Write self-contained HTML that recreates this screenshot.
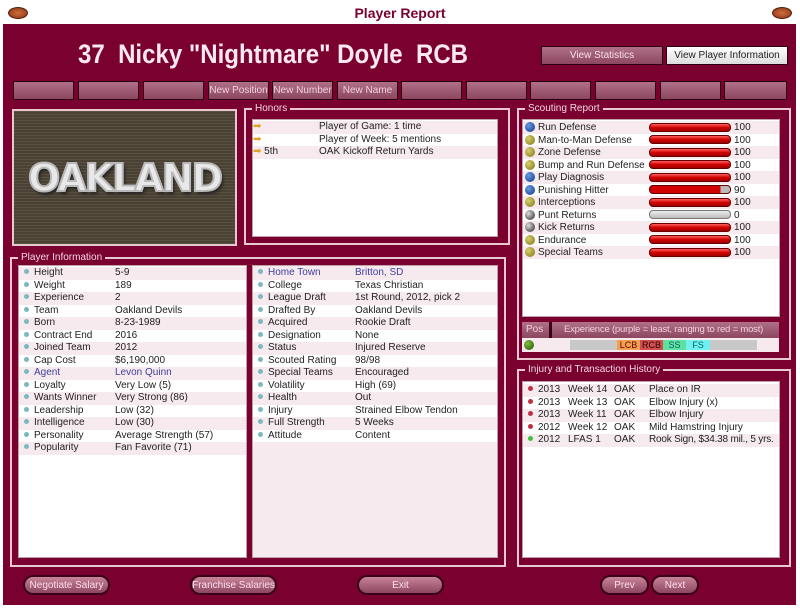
<!DOCTYPE html>
<html><head><meta charset="utf-8"><style>
*{margin:0;padding:0;box-sizing:border-box}
body{width:800px;height:608px;background:#fff;font-family:"Liberation Sans",sans-serif;font-size:10px;position:relative;overflow:hidden}
.a{position:absolute}
#main{left:3px;top:24px;width:793px;height:581px;background:#7a0030}
.title{left:0;top:0;width:800px;height:24px;text-align:center;font-size:14px;font-weight:bold;color:#7a0030;line-height:26px}
.ball{width:20px;height:12px;border-radius:50%;background:radial-gradient(#d07040,#8a3010);border:1px solid #502010;top:7px}
.frame{border:2px solid #e8c8d0;}
.leg{background:#7a0030;color:#f0d8e0;font-size:10px;padding:0 3px;top:-8px;left:6px;line-height:13px}
.list{background:#fff;border:1px solid #c0a0a8}
.row{position:absolute;left:0;right:0;height:12.5px;line-height:12.5px;color:#222;font-size:10px;white-space:nowrap}
.row:nth-child(odd){background:#f6eaee}
.btn{height:19px;background:linear-gradient(#b07088,#8c4660);border:1px solid #2a0010;color:#f0d0dc;font-size:10px;text-align:center;line-height:17px}
.pb{height:20px;border-radius:10px;background:linear-gradient(#c88498,#8c4660);border:2px solid #3a0018;color:#fde;font-size:10px;text-align:center;line-height:17px}
.dot{display:inline-block;width:5px;height:5px;border-radius:50%;background:#7cb8c0;margin:0 5px 0 5px;vertical-align:1px}
.ball2{position:absolute;left:2px;top:1px;width:10px;height:10px;border-radius:50%}
.lb{position:absolute;left:15px;top:1px}
.bar{position:absolute;left:126px;top:1.5px;width:82px;height:9px;border-radius:4px;background:linear-gradient(#ff6060,#d00000 50%,#a00000);border:1px solid #600}
.v{position:absolute;left:211px;top:1px;line-height:12.5px}
</style></head><body>
<div class="a title">Player Report</div>
<div class="a ball" style="left:8px"></div>
<div class="a ball" style="left:772px"></div>
<div class="a" id="main"></div>
<div class="a" style="left:78px;top:39px;font-size:27px;font-weight:bold;color:#fbe8f0;white-space:nowrap;transform:scaleX(0.89);transform-origin:0 0;font-family:'Liberation Sans',sans-serif">37 &nbsp;Nicky "Nightmare" Doyle &nbsp;RCB</div>
<div class="a btn" style="left:541px;top:46px;width:122px;color:#f8e0ea">View Statistics</div>
<div class="a btn" style="left:666px;top:46px;width:122px;background:linear-gradient(#fff,#ddd);color:#222">View Player Information</div>
<div class="a btn" style="left:13px;top:81px;width:61px"></div>
<div class="a btn" style="left:78px;top:81px;width:61px"></div>
<div class="a btn" style="left:143px;top:81px;width:61px"></div>
<div class="a btn" style="left:208px;top:81px;width:61px">New Position</div>
<div class="a btn" style="left:272px;top:81px;width:61px">New Number</div>
<div class="a btn" style="left:337px;top:81px;width:61px">New Name</div>
<div class="a btn" style="left:401px;top:81px;width:61px"></div>
<div class="a btn" style="left:466px;top:81px;width:61px"></div>
<div class="a btn" style="left:530px;top:81px;width:61px"></div>
<div class="a btn" style="left:595px;top:81px;width:61px"></div>
<div class="a btn" style="left:660px;top:81px;width:61px"></div>
<div class="a btn" style="left:724px;top:81px;width:63px"></div>

<div class="a" style="left:12px;top:109px;width:225px;height:137px;border:2px solid #e8c8d0;background:repeating-linear-gradient(0deg,#5a5040 0 1px,#4a4234 1px 3px),#544a3c"></div>
<div class="a" style="left:12px;top:156px;width:225px;text-align:center;font-size:38px;font-weight:900;font-family:'DejaVu Sans','Liberation Sans',sans-serif;color:#e8e8e8;-webkit-text-stroke:2px #b8b8b8;letter-spacing:-2px;text-shadow:2px 3px 3px #222">OAKLAND</div>

<div class="a frame" style="left:244px;top:108px;width:266px;height:137px"><div class="a leg">Honors</div></div>
<div class="a list" style="left:252px;top:119px;width:246px;height:118px">
<div class="row" style="top:1px"><span style="color:#e0a020">➡</span><span class="a" style="left:66px">Player of Game: 1 time</span></div>
<div class="row" style="top:13.5px;background:#fff"><span style="color:#e0a020">➡</span><span class="a" style="left:66px">Player of Week: 5 mentions</span></div>
<div class="row" style="top:26px"><span style="color:#e0a020">➡</span> 5th<span class="a" style="left:66px">OAK Kickoff Return Yards</span></div>
</div>

<div class="a frame" style="left:517px;top:108px;width:274px;height:252px"><div class="a leg">Scouting Report</div></div>
<div class="a list" style="left:522px;top:119px;width:258px;height:198px">
<div class="row" style="top:1px"><span class="ball2" style="background:radial-gradient(circle at 35% 35%,#6a9ae0,#0a3a8a)"></span><span class="lb">Run Defense</span><div class="bar"></div><span class="v">100</span></div>
<div class="row" style="top:13.5px"><span class="ball2" style="background:radial-gradient(circle at 35% 35%,#d8d070,#807010)"></span><span class="lb">Man-to-Man Defense</span><div class="bar"></div><span class="v">100</span></div>
<div class="row" style="top:26px"><span class="ball2" style="background:radial-gradient(circle at 35% 35%,#d8d070,#807010)"></span><span class="lb">Zone Defense</span><div class="bar"></div><span class="v">100</span></div>
<div class="row" style="top:38.5px"><span class="ball2" style="background:radial-gradient(circle at 35% 35%,#d8d070,#807010)"></span><span class="lb">Bump and Run Defense</span><div class="bar"></div><span class="v">100</span></div>
<div class="row" style="top:51px"><span class="ball2" style="background:radial-gradient(circle at 35% 35%,#6a9ae0,#0a3a8a)"></span><span class="lb">Play Diagnosis</span><div class="bar"></div><span class="v">100</span></div>
<div class="row" style="top:63.5px"><span class="ball2" style="background:radial-gradient(circle at 35% 35%,#6a9ae0,#0a3a8a)"></span><span class="lb">Punishing Hitter</span><div class="bar" style="background:linear-gradient(90deg,#d00000 88%,#bbb 88%)"></div><span class="v">90</span></div>
<div class="row" style="top:76px"><span class="ball2" style="background:radial-gradient(circle at 35% 35%,#d8d070,#807010)"></span><span class="lb">Interceptions</span><div class="bar"></div><span class="v">100</span></div>
<div class="row" style="top:88.5px"><span class="ball2" style="background:radial-gradient(circle at 35% 35%,#ddd,#222)"></span><span class="lb">Punt Returns</span><div class="bar" style="background:linear-gradient(#eee,#bbb);border-color:#777"></div><span class="v">0</span></div>
<div class="row" style="top:101px"><span class="ball2" style="background:radial-gradient(circle at 35% 35%,#ddd,#222)"></span><span class="lb">Kick Returns</span><div class="bar"></div><span class="v">100</span></div>
<div class="row" style="top:113.5px"><span class="ball2" style="background:radial-gradient(circle at 35% 35%,#d8d070,#807010)"></span><span class="lb">Endurance</span><div class="bar"></div><span class="v">100</span></div>
<div class="row" style="top:126px"><span class="ball2" style="background:radial-gradient(circle at 35% 35%,#d8d070,#807010)"></span><span class="lb">Special Teams</span><div class="bar"></div><span class="v">100</span></div>
</div>
<div class="a" style="left:522px;top:322px;width:257px;height:16px;background:linear-gradient(#b07088,#8c4660);color:#f0d0dc;line-height:16px;white-space:nowrap;overflow:hidden">
<span class="a" style="left:4px">Pos</span><span class="a" style="left:27px;top:0;width:3px;height:16px;background:#3a0018"></span><span class="a" style="left:42px;font-size:9.5px;letter-spacing:-0.2px">Experience (purple = least, ranging to red = most)</span></div>
<div class="a" style="left:522px;top:338px;width:257px;height:14px;background:#f6eaee">
<span class="a" style="left:2px;top:2px;width:10px;height:10px;border-radius:50%;background:radial-gradient(circle at 35% 35%,#80c040,#205000)"></span>
<span class="a" style="left:48px;top:2px;width:187px;height:10px;background:#c8c8c8"></span>
<span class="a" style="left:95px;top:2px;width:23px;height:10px;background:#f0a050;font-size:9px;line-height:10px;text-align:center;color:#600">LCB</span>
<span class="a" style="left:118px;top:2px;width:23px;height:10px;background:#d05050;font-size:9px;line-height:10px;text-align:center;color:#300">RCB</span>
<span class="a" style="left:141px;top:2px;width:23px;height:10px;background:#60e0a0;font-size:9px;line-height:10px;text-align:center;color:#066">SS</span>
<span class="a" style="left:164px;top:2px;width:24px;height:10px;background:#70f0f0;font-size:9px;line-height:10px;text-align:center;color:#066">FS</span>
</div>

<div class="a frame" style="left:10px;top:257px;width:496px;height:310px"><div class="a leg">Player Information</div></div>
<div class="a list" style="left:18px;top:265px;width:229px;height:293px">
<div class="row" style="top:1px"><span class="dot"></span>Height<span class="a" style="left:96px">5-9</span></div>
<div class="row" style="top:13.5px"><span class="dot"></span>Weight<span class="a" style="left:96px">189</span></div>
<div class="row" style="top:26px"><span class="dot"></span>Experience<span class="a" style="left:96px">2</span></div>
<div class="row" style="top:38.5px"><span class="dot"></span>Team<span class="a" style="left:96px">Oakland Devils</span></div>
<div class="row" style="top:51px"><span class="dot"></span>Born<span class="a" style="left:96px">8-23-1989</span></div>
<div class="row" style="top:63.5px"><span class="dot"></span>Contract End<span class="a" style="left:96px">2016</span></div>
<div class="row" style="top:76px"><span class="dot"></span>Joined Team<span class="a" style="left:96px">2012</span></div>
<div class="row" style="top:88.5px"><span class="dot"></span>Cap Cost<span class="a" style="left:96px">$6,190,000</span></div>
<div class="row" style="top:101px;color:#4040a0"><span class="dot"></span>Agent<span class="a" style="left:96px">Levon Quinn</span></div>
<div class="row" style="top:113.5px"><span class="dot"></span>Loyalty<span class="a" style="left:96px">Very Low (5)</span></div>
<div class="row" style="top:126px"><span class="dot"></span>Wants Winner<span class="a" style="left:96px">Very Strong (86)</span></div>
<div class="row" style="top:138.5px"><span class="dot"></span>Leadership<span class="a" style="left:96px">Low (32)</span></div>
<div class="row" style="top:151px"><span class="dot"></span>Intelligence<span class="a" style="left:96px">Low (30)</span></div>
<div class="row" style="top:163.5px"><span class="dot"></span>Personality<span class="a" style="left:96px">Average Strength (57)</span></div>
<div class="row" style="top:176px"><span class="dot"></span>Popularity<span class="a" style="left:96px">Fan Favorite (71)</span></div>
</div>
<div class="a list" style="left:252px;top:265px;width:246px;height:293px;background:#f6eaee">
<div class="row" style="top:1px;color:#4040a0"><span class="dot"></span>Home Town<span class="a" style="left:102px">Britton, SD</span></div>
<div class="row" style="top:13.5px;background:#fff"><span class="dot"></span>College<span class="a" style="left:102px">Texas Christian</span></div>
<div class="row" style="top:26px"><span class="dot"></span>League Draft<span class="a" style="left:102px">1st Round, 2012, pick 2</span></div>
<div class="row" style="top:38.5px;background:#fff"><span class="dot"></span>Drafted By<span class="a" style="left:102px">Oakland Devils</span></div>
<div class="row" style="top:51px"><span class="dot"></span>Acquired<span class="a" style="left:102px">Rookie Draft</span></div>
<div class="row" style="top:63.5px;background:#fff"><span class="dot"></span>Designation<span class="a" style="left:102px">None</span></div>
<div class="row" style="top:76px"><span class="dot"></span>Status<span class="a" style="left:102px">Injured Reserve</span></div>
<div class="row" style="top:88.5px;background:#fff"><span class="dot"></span>Scouted Rating<span class="a" style="left:102px">98/98</span></div>
<div class="row" style="top:101px"><span class="dot"></span>Special Teams<span class="a" style="left:102px">Encouraged</span></div>
<div class="row" style="top:113.5px;background:#fff"><span class="dot"></span>Volatility<span class="a" style="left:102px">High (69)</span></div>
<div class="row" style="top:126px"><span class="dot"></span>Health<span class="a" style="left:102px">Out</span></div>
<div class="row" style="top:138.5px;background:#fff"><span class="dot"></span>Injury<span class="a" style="left:102px">Strained Elbow Tendon</span></div>
<div class="row" style="top:151px"><span class="dot"></span>Full Strength<span class="a" style="left:102px">5 Weeks</span></div>
<div class="row" style="top:163.5px;background:#fff"><span class="dot"></span>Attitude<span class="a" style="left:102px">Content</span></div>
</div>

<div class="a frame" style="left:517px;top:369px;width:274px;height:198px"><div class="a leg">Injury and Transaction History</div></div>
<div class="a list" style="left:522px;top:381px;width:258px;height:177px">
<div class="row" style="top:2px"><span class="dot" style="background:#c03040"></span>2013<span class="a" style="left:45px">Week 14</span><span class="a" style="left:91px">OAK</span><span class="a" style="left:126px">Place on IR</span></div>
<div class="row" style="top:14.5px"><span class="dot" style="background:#c03040"></span>2013<span class="a" style="left:45px">Week 13</span><span class="a" style="left:91px">OAK</span><span class="a" style="left:126px">Elbow Injury (x)</span></div>
<div class="row" style="top:27px"><span class="dot" style="background:#c03040"></span>2013<span class="a" style="left:45px">Week 11</span><span class="a" style="left:91px">OAK</span><span class="a" style="left:126px">Elbow Injury</span></div>
<div class="row" style="top:39.5px"><span class="dot" style="background:#c03040"></span>2012<span class="a" style="left:45px">Week 12</span><span class="a" style="left:91px">OAK</span><span class="a" style="left:126px">Mild Hamstring Injury</span></div>
<div class="row" style="top:52px"><span class="dot" style="background:#40c040"></span>2012<span class="a" style="left:45px">LFAS 1</span><span class="a" style="left:91px">OAK</span><span class="a" style="left:126px;letter-spacing:-0.2px">Rook Sign, $34.38 mil., 5 yrs.</span></div>
</div>

<div class="a pb" style="left:23px;top:575px;width:87px">Negotiate Salary</div>
<div class="a pb" style="left:190px;top:575px;width:87px">Franchise Salaries</div>
<div class="a pb" style="left:357px;top:575px;width:87px">Exit</div>
<div class="a pb" style="left:600px;top:575px;width:49px">Prev</div>
<div class="a pb" style="left:651px;top:575px;width:48px">Next</div>
</body></html>
